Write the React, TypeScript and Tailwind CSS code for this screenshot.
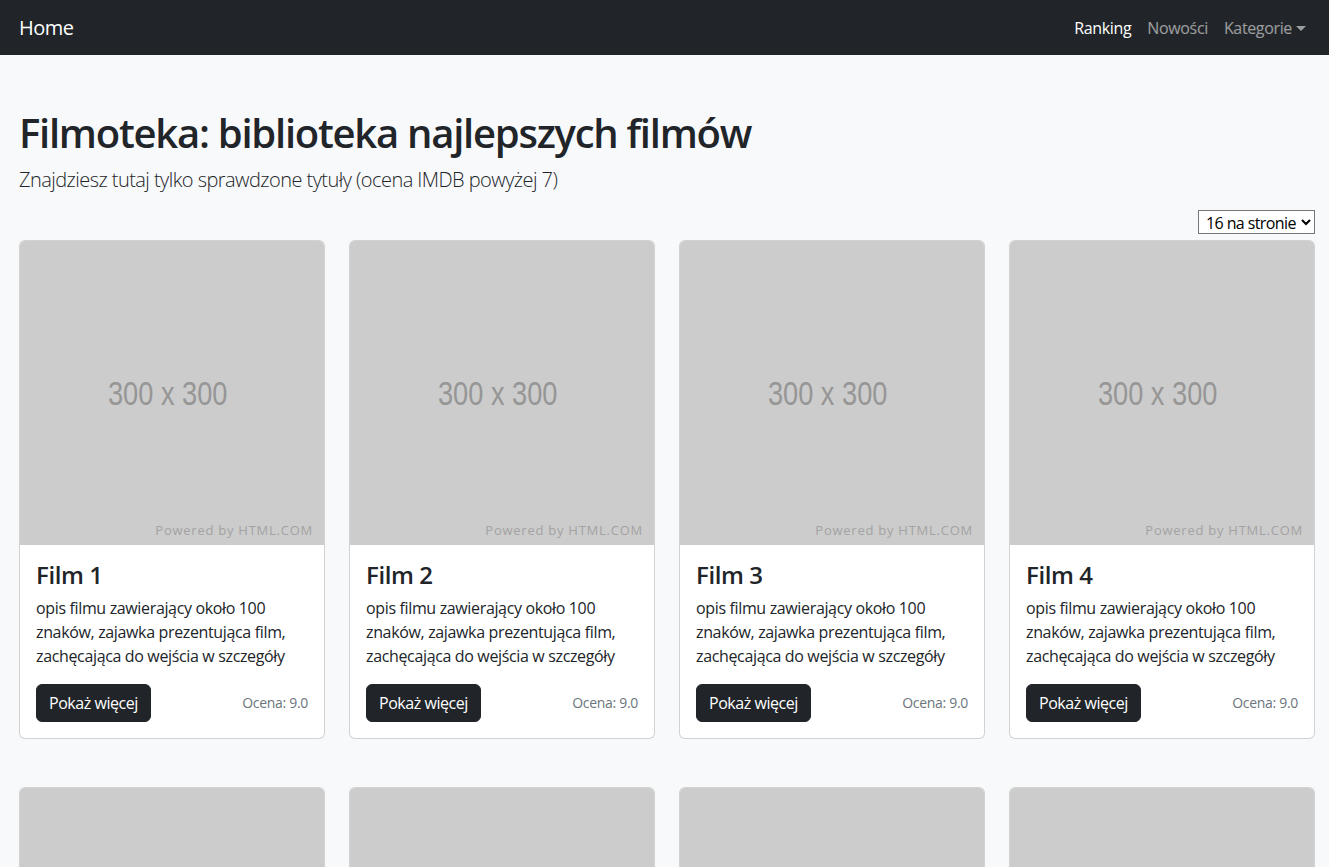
import { useState } from "react";

const films = Array.from({ length: 8 }, (_, i) => ({
  id: i + 1,
  title: `Film ${i + 1}`,
  description:
    "opis filmu zawierający około 100 znaków, zajawka prezentująca film, zachęcająca do wejścia w szczegóły",
  rating: "9.0",
}));

const font = "font-['Segoe_UI','Open_Sans','Noto_Sans',sans-serif]";

function Placeholder() {
  return (
    <div className="relative flex aspect-square w-full items-center justify-center rounded-t-[5px] bg-[#cccccc]">
      <span className="-ml-[8px] font-['Liberation_Sans',Arial,sans-serif] text-[34px] text-[#969696] [transform:scaleX(0.8)]">
        300 x 300
      </span>
      <span className="absolute bottom-[5px] right-[11px] font-['Open_Sans',sans-serif] text-[13px] tracking-[0.75px] text-[#a3a3a3]">
        Powered by HTML.COM
      </span>
    </div>
  );
}

function FilmCard({ film }: { film: (typeof films)[number] }) {
  return (
    <div className="flex flex-col rounded-md border border-black/[0.175] bg-white">
      <Placeholder />
      <div className="flex flex-col px-4 pt-[16px] pb-4">
        <h3 className="text-[24px] font-semibold leading-[1.2] tracking-[-0.4px] text-[#212529]">
          {film.title}
        </h3>
        <p className="mt-[6px] text-[16px] leading-6 tracking-[-0.35px] text-[#212529]">
          {film.description}
        </p>
        <div className="mt-4 flex items-center justify-between">
          <button
            type="button"
            className="rounded-md border border-[#212529] bg-[#212529] px-3 py-1.5 text-[16px] leading-6 tracking-[-0.45px] text-white"
          >
            Pokaż więcej
          </button>
          <small className="text-[14px] tracking-[-0.3px] text-[#6c757d]">Ocena: {film.rating}</small>
        </div>
      </div>
    </div>
  );
}

export default function App() {
  const [perPage, setPerPage] = useState("16");

  return (
    <div className={`min-h-screen bg-[#f8f9fa] text-[#212529] ${font}`}>
      {/* navbar */}
      <nav className="flex h-[55px] items-center justify-between bg-[#212529] pl-[19px] pr-[23px]">
        <a href="#" className="text-[20px] tracking-[-0.5px] text-white">
          Home
        </a>
        <ul className="flex items-center gap-4 text-[16px] tracking-[-0.35px]">
          <li className="text-white">Ranking</li>
          <li className="text-white/55">Nowości</li>
          <li className="flex items-center text-white/55">
            Kategorie
            <span className="ml-[4px] mt-[2px] h-0 w-0 border-x-[5px] border-t-[5px] border-x-transparent border-t-current" />
          </li>
        </ul>
      </nav>

      <main className="pl-[19px] pr-[14px] pt-[54px]">
        <h1 className="text-[40px] font-semibold leading-[1.2] tracking-[-1.25px]">
          Filmoteka: biblioteka najlepszych filmów
        </h1>
        <p className="mt-[8px] text-[20px] font-light tracking-[-0.55px] text-[#212529]">
          Znajdziesz tutaj tylko sprawdzone tytuły (ocena IMDB powyżej 7)
        </p>

        <div className="mt-[15px] flex justify-end">
          <select
            value={perPage}
            onChange={(e) => setPerPage(e.target.value)}
            className="h-[24px] border border-[#767676] bg-white pl-[3px] pr-[2px] text-[16px] tracking-[-0.6px] text-black"
          >
            <option value="8">8 na stronie</option>
            <option value="16">16 na stronie</option>
            <option value="32">32 na stronie</option>
          </select>
        </div>

        <div className="mt-[6px] grid grid-cols-4 gap-x-6 gap-y-12 pb-12">
          {films.map((f) => (
            <FilmCard key={f.id} film={f} />
          ))}
        </div>
      </main>
    </div>
  );
}
